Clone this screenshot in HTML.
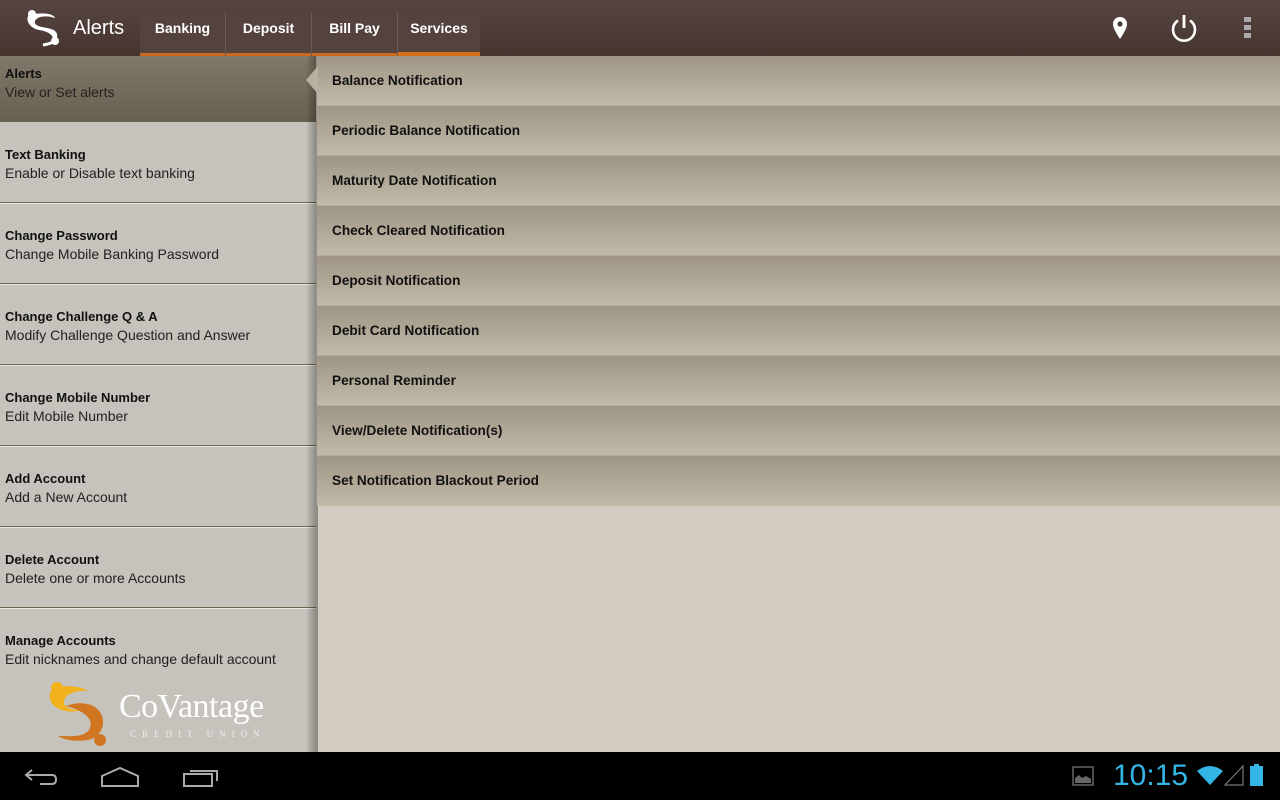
<!DOCTYPE html>
<html><head><meta charset="utf-8"><style>
*{margin:0;padding:0;box-sizing:border-box}
body{width:1280px;height:800px;overflow:hidden;font-family:"Liberation Sans",sans-serif;background:#d3ccc2;position:relative}
.top{position:absolute;left:0;top:0;width:1280px;height:56px;background:linear-gradient(#564441,#46352f);}
.tab{position:absolute;top:12px;height:44px;background:#54423f;color:#fff;font-weight:bold;font-size:14px;text-align:center;line-height:32px;border-bottom:3px solid #c8691c}
.tab.sel{border-bottom:4px solid #d2701c}
.sepv{position:absolute;top:12px;width:1px;height:44px;background:#6a5a56}
.left{position:absolute;left:0;top:56px;width:316px;height:696px;background:#c6c2bc}
.lit{position:absolute;left:0;width:316px;height:81px;border-bottom:1px solid #6e6650;box-shadow:0 1px 0 #e9e6e1}
.lit b{position:absolute;left:5px;font-size:13px;color:#111}
.lit span{position:absolute;left:5px;font-size:14px;color:#222}
.shadow{position:absolute;left:306px;top:56px;width:12px;height:696px;background:linear-gradient(90deg,rgba(0,0,0,0),rgba(0,0,0,.35))}
.rit{position:absolute;left:317px;width:963px;height:50px;background:linear-gradient(#9e9584,#c2baa9);border-bottom:1px solid #b3aa99;font-weight:bold;font-size:13.6px;color:#111;padding-left:15px;line-height:50px}
.nav{position:absolute;left:0;top:752px;width:1280px;height:48px;background:#000}
</style></head><body>
<div class="top">
<svg style="position:absolute;left:25px;top:9px" width="40" height="38" viewBox="0 0 40 38"><circle cx="7" cy="5" r="4" fill="#fff"/><path d="M4 6 C20 2 30 6 30 9 C22 6 12 7 10 12 C8 18 20 18 26 20 C34 22 34 30 28 33 C30 26 22 22 14 21 C4 19 0 10 4 6Z" fill="#fff"/><circle cx="30" cy="32" r="4" fill="#fff"/><path d="M18 36 C24 35 28 34 30 30" stroke="#fff" stroke-width="3" fill="none"/></svg>
<div style="position:absolute;left:73px;top:17px;color:#fff;font-size:20px">Alerts</div>
<div class="tab" style="left:140px;width:85px">Banking</div>
<div class="tab" style="left:226px;width:85px">Deposit</div>
<div class="tab" style="left:312px;width:85px">Bill Pay</div>
<div class="tab sel" style="left:398px;width:82px">Services</div>
<div class="sepv" style="left:225px"></div><div class="sepv" style="left:311px"></div><div class="sepv" style="left:397px"></div>
<svg style="position:absolute;left:1111px;top:16px" width="18" height="24" viewBox="0 0 18 24"><path d="M9 1C4.5 1 2 4.5 2 8c0 5 7 15 7 15s7-10 7-15c0-3.5-2.5-7-7-7z" fill="#fff"/><circle cx="9" cy="8" r="2.6" fill="#4a3935"/></svg>
<svg style="position:absolute;left:1169px;top:13px" width="30" height="30" viewBox="0 0 30 30"><path d="M9 7.5A11 11 0 1 0 21 7.5" stroke="#fff" stroke-width="2.6" fill="none"/><line x1="15" y1="2" x2="15" y2="15" stroke="#fff" stroke-width="2.8"/></svg>
<div style="position:absolute;left:1244px;top:17px;width:7px;height:5px;background:#aaa"></div>
<div style="position:absolute;left:1244px;top:25px;width:7px;height:5px;background:#aaa"></div>
<div style="position:absolute;left:1244px;top:33px;width:7px;height:5px;background:#aaa"></div>
</div>
<div class="left">
<div style="position:absolute;left:0;top:0;width:316px;height:66px;background:linear-gradient(#807868,#685f50)">
<b style="position:absolute;left:5px;top:10px;font-size:13px;color:#111">Alerts</b><span style="position:absolute;left:5px;top:28px;font-size:14px;color:#222">View or Set alerts</span></div>
<div class="lit" style="top:66px"><b style="top:25px">Text Banking</b><span style="top:43px">Enable or Disable text banking</span></div>
<div class="lit" style="top:147px"><b style="top:25px">Change Password</b><span style="top:43px">Change Mobile Banking Password</span></div>
<div class="lit" style="top:228px"><b style="top:25px">Change Challenge Q &amp; A</b><span style="top:43px">Modify Challenge Question and Answer</span></div>
<div class="lit" style="top:309px"><b style="top:25px">Change Mobile Number</b><span style="top:43px">Edit Mobile Number</span></div>
<div class="lit" style="top:390px"><b style="top:25px">Add Account</b><span style="top:43px">Add a New Account</span></div>
<div class="lit" style="top:471px"><b style="top:25px">Delete Account</b><span style="top:43px">Delete one or more Accounts</span></div>
<div class="lit" style="top:552px;border:none;box-shadow:none"><b style="top:25px">Manage Accounts</b><span style="top:43px">Edit nicknames and change default account</span></div>
<svg style="position:absolute;left:48px;top:626px" width="70" height="66" viewBox="0 0 70 66"><circle cx="9" cy="6" r="6" fill="#f2b21c"/><path d="M4 8 C16 2 32 4 40 9 C28 8 16 12 16 20 C16 26 24 28 32 28 C22 32 8 28 3 20 C1 15 1 11 4 8Z" fill="#f2b21c"/><path d="M18 24 C34 18 50 22 54 34 C58 46 50 56 40 58 C28 60 16 58 10 54 C22 54 38 56 42 46 C46 36 34 28 18 24Z" fill="#d07520"/><circle cx="52" cy="58" r="6" fill="#d07520"/></svg>
<div style="position:absolute;left:119px;top:632px;font-family:'Liberation Serif',serif;font-size:34px;color:#fff;letter-spacing:-0.5px">CoVantage</div>
<div style="position:absolute;left:130px;top:673px;font-family:'Liberation Serif',serif;font-size:9px;color:#eee;letter-spacing:6px">CREDIT UNION</div>
</div>
<div class="shadow"></div>
<div class="rit" style="top:56px">Balance Notification</div>
<div class="rit" style="top:106px">Periodic Balance Notification</div>
<div class="rit" style="top:156px">Maturity Date Notification</div>
<div class="rit" style="top:206px">Check Cleared Notification</div>
<div class="rit" style="top:256px">Deposit Notification</div>
<div class="rit" style="top:306px">Debit Card Notification</div>
<div class="rit" style="top:356px">Personal Reminder</div>
<div class="rit" style="top:406px">View/Delete Notification(s)</div>
<div class="rit" style="top:456px;border:none">Set Notification Blackout Period</div>
<svg style="position:absolute;left:305px;top:66px" width="13" height="28"><path d="M13 0 L1 14 L13 28Z" fill="#b8b0a0"/></svg>
<div class="nav">
<svg style="position:absolute;left:22px;top:14px" width="38" height="22" viewBox="0 0 38 22"><path d="M10 4 L4 9 L10 14 M4 9 H30 Q34 9 34 13.5 Q34 18 30 18 H18" stroke="#aaa" stroke-width="2" fill="none"/></svg>
<svg style="position:absolute;left:100px;top:14px" width="40" height="22" viewBox="0 0 40 22"><path d="M2 20 V10 L20 2 L38 10 V20Z" stroke="#aaa" stroke-width="2" fill="none"/></svg>
<svg style="position:absolute;left:182px;top:14px" width="38" height="22" viewBox="0 0 38 22"><rect x="2" y="8" width="28" height="12" stroke="#aaa" stroke-width="2" fill="none"/><path d="M8 5 H35 V15" stroke="#aaa" stroke-width="2" fill="none"/></svg>
<svg style="position:absolute;left:1072px;top:766px;position:fixed" width="22" height="20" viewBox="0 0 22 20"><rect x="1" y="1" width="20" height="18" stroke="#666" stroke-width="1.5" fill="none"/><path d="M3 17 V12 L7 9 L10 12 L14 10 L19 13 V17Z" fill="#666"/></svg>
<div style="position:absolute;left:1113px;top:7px;color:#33b5e5;font-size:30px">10:15</div>
<svg style="position:absolute;left:1196px;top:764px;position:fixed" width="28" height="22" viewBox="0 0 28 22"><path d="M14 21 L1 7 Q14 -3 27 7Z" fill="#33b5e5"/></svg>
<svg style="position:absolute;left:1224px;top:764px;position:fixed" width="20" height="22" viewBox="0 0 20 22"><path d="M1 21 L19 2 V21Z" stroke="#777" stroke-width="1.2" fill="none"/></svg>
<div style="position:absolute;left:1250px;top:14px;width:13px;height:20px;background:#33b5e5"></div>
<div style="position:absolute;left:1254px;top:12px;width:5px;height:3px;background:#33b5e5"></div>
</div>
</body></html>
